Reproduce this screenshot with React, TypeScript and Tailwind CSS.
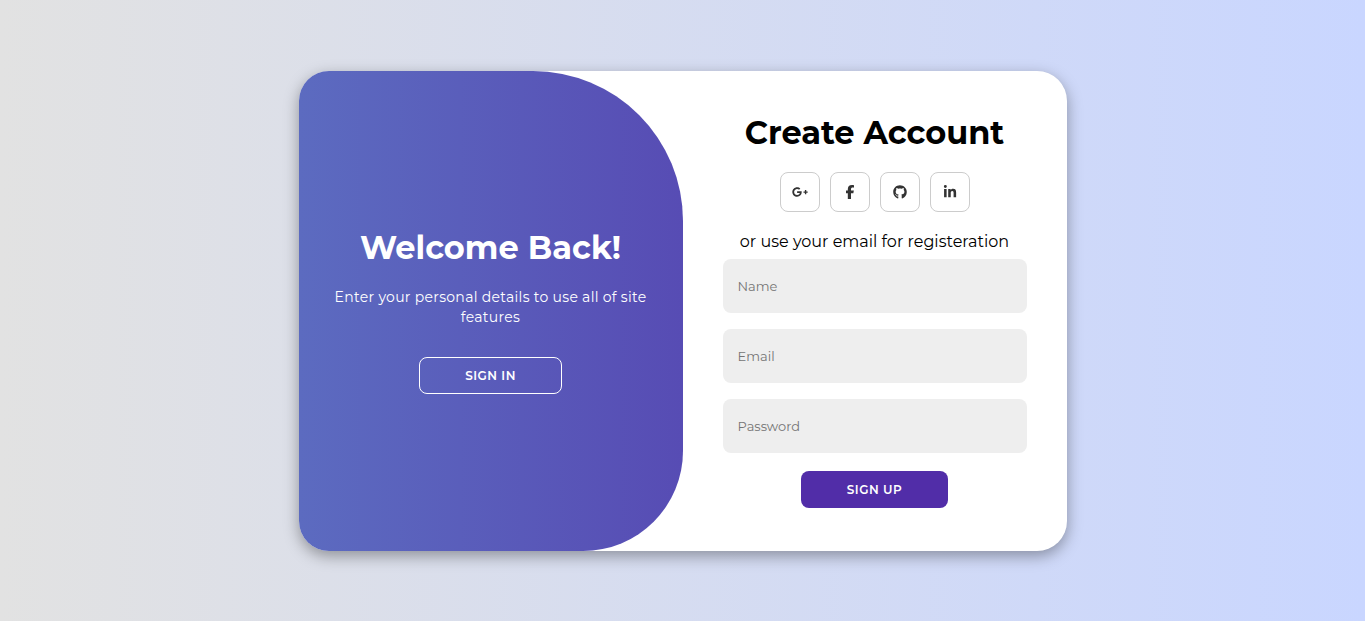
import React from "react";
import { FaFacebookF, FaGithub, FaGooglePlusG, FaLinkedinIn } from "react-icons/fa6";

const socials = [
  { label: "Google Plus", Icon: FaGooglePlusG, size: "size-4" },
  { label: "Facebook", Icon: FaFacebookF, size: "size-3.5" },
  { label: "GitHub", Icon: FaGithub, size: "size-3.5" },
  { label: "LinkedIn", Icon: FaLinkedinIn, size: "size-3.5" },
];

const fields = [
  { label: "Name", type: "text" },
  { label: "Email", type: "email" },
  { label: "Password", type: "password" },
];

export default function App() {
  return (
    <main className="flex min-h-screen items-center justify-center bg-linear-to-r/srgb from-[#e2e2e2] to-[#c9d6ff] font-['Montserrat','Open_Sans',sans-serif]">
      <div className="grid min-h-[480px] w-full max-w-3xl grid-cols-2 overflow-hidden rounded-[30px] bg-white shadow-[0_5px_15px_rgba(0,0,0,0.35)]">
        <section className="flex flex-col items-center justify-center rounded-tr-[150px] rounded-br-[100px] bg-linear-to-r/srgb from-[#5c6bc0] to-[#574cb4] px-[30px] text-center text-white">
          <h1 className="text-[32px] leading-[39px] font-bold">Welcome Back!</h1>
          <p className="my-5 text-sm leading-5 tracking-[0.3px]">Enter your personal details to use all of site features</p>
          <button type="button" className="mt-2.5 rounded-lg border border-white px-[45px] py-2.5 text-xs leading-[15px] font-semibold tracking-[0.5px] uppercase">
            Sign In
          </button>
        </section>
        <form className="flex flex-col items-center justify-center px-10" onSubmit={(e) => e.preventDefault()}>
          <h1 className="text-[32px] leading-[39px] font-bold text-black">Create Account</h1>
          <div className="my-5 flex gap-2.5">
            {socials.map(({ label, Icon, size }) => (
              <a key={label} href="#" aria-label={label} className="flex size-10 items-center justify-center rounded-lg border border-[#ccc] text-[#333]">
                <Icon className={size} />
              </a>
            ))}
          </div>
          <span className="text-base leading-[19px]">or use your email for registeration</span>
          {fields.map(({ label, type }) => (
            <input key={label} type={type} aria-label={label} placeholder={label} className="my-2 h-[54px] w-full rounded-lg bg-[#eee] px-[15px] text-[13px] outline-none placeholder:text-[#757575]" />
          ))}
          <button type="submit" className="mt-2.5 rounded-lg border border-transparent bg-[#512da8] px-[45px] py-2.5 text-xs leading-[15px] font-semibold tracking-[0.5px] text-white uppercase">
            Sign Up
          </button>
        </form>
      </div>
    </main>
  );
}
